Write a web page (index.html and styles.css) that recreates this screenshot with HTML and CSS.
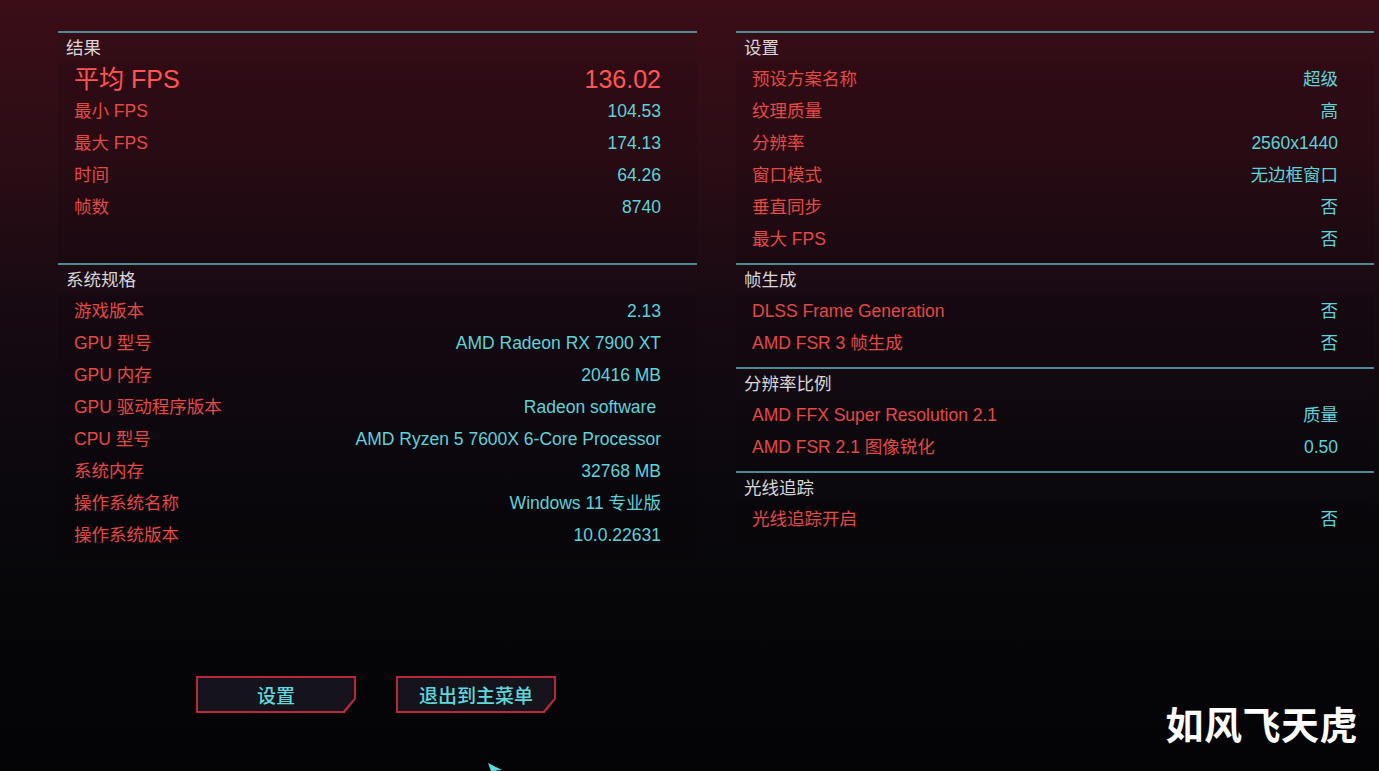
FILE: index.html
```html
<!DOCTYPE html>
<html lang="zh-CN">
<head>
    <meta charset="UTF-8">
    <meta name="viewport" content="width=device-width, initial-scale=1.0">
    <title>基准测试结果</title>
    <link rel="stylesheet" href="styles.css">
</head>
<body>

    <div class="board">
        <!-- left column, top -->
        <div class="section">
            <div class="sec-head">结果</div>
            <div class="row big"><span class="label">平均 FPS</span><span class="value">136.02</span></div>
            <div class="row"><span class="label">最小 FPS</span><span class="value">104.53</span></div>
            <div class="row"><span class="label">最大 FPS</span><span class="value">174.13</span></div>
            <div class="row"><span class="label">时间</span><span class="value">64.26</span></div>
            <div class="row"><span class="label">帧数</span><span class="value">8740</span></div>
        </div>

        <!-- right column, top -->
        <div class="section">
            <div class="sec-head">设置</div>
            <div class="row"><span class="label">预设方案名称</span><span class="value">超级</span></div>
            <div class="row"><span class="label">纹理质量</span><span class="value">高</span></div>
            <div class="row"><span class="label">分辨率</span><span class="value">2560x1440</span></div>
            <div class="row"><span class="label">窗口模式</span><span class="value">无边框窗口</span></div>
            <div class="row"><span class="label">垂直同步</span><span class="value">否</span></div>
            <div class="row"><span class="label">最大 FPS</span><span class="value">否</span></div>
        </div>

        <!-- left column, bottom -->
        <div class="col">
            <div class="section">
                <div class="sec-head">系统规格</div>
                <div class="row"><span class="label">游戏版本</span><span class="value">2.13</span></div>
                <div class="row"><span class="label">GPU 型号</span><span class="value">AMD Radeon RX 7900 XT</span></div>
                <div class="row"><span class="label">GPU 内存</span><span class="value">20416 MB</span></div>
                <div class="row"><span class="label">GPU 驱动程序版本</span><span class="value">Radeon software&nbsp;</span></div>
                <div class="row"><span class="label">CPU 型号</span><span class="value">AMD Ryzen 5 7600X 6-Core Processor</span></div>
                <div class="row"><span class="label">系统内存</span><span class="value">32768 MB</span></div>
                <div class="row"><span class="label">操作系统名称</span><span class="value">Windows 11 专业版</span></div>
                <div class="row"><span class="label">操作系统版本</span><span class="value">10.0.22631</span></div>
            </div>
        </div>

        <!-- right column, bottom -->
        <div class="col">
            <div class="section">
                <div class="sec-head">帧生成</div>
                <div class="row"><span class="label">DLSS Frame Generation</span><span class="value">否</span></div>
                <div class="row"><span class="label">AMD FSR 3 帧生成</span><span class="value">否</span></div>
            </div>
            <div class="section">
                <div class="sec-head">分辨率比例</div>
                <div class="row"><span class="label">AMD FFX Super Resolution 2.1</span><span class="value">质量</span></div>
                <div class="row"><span class="label">AMD FSR 2.1 图像锐化</span><span class="value">0.50</span></div>
            </div>
            <div class="section">
                <div class="sec-head">光线追踪</div>
                <div class="row"><span class="label">光线追踪开启</span><span class="value">否</span></div>
            </div>
        </div>
    </div>

    <div class="actions">
        <button class="cp-btn">设置</button>
        <button class="cp-btn">退出到主菜单</button>
    </div>

    <!-- mouse pointer left on screen -->
    <svg class="cursor" width="20" height="12" viewBox="0 0 20 12">
        <path d="M2 1 L16 8 L10 8.5 L8 12 L6 12 Z" fill="#5fd8dc"/>
    </svg>

    <div class="watermark">如风飞天虎</div>

</body>
</html>
```

FILE: styles.css
```css
* {
  margin: 0;
  padding: 0;
  box-sizing: border-box;
}

body {
  width: 1379px;
  height: 771px;
  overflow: hidden;
  position: relative;
  font-family: "Liberation Sans", "Noto Sans CJK SC", sans-serif;
  font-size: 17.5px;
  background: linear-gradient(180deg, #3b0d17 0%, #2c0d15 20%, #170a12 40%, #0c080e 60%, #060609 78%, #040407 100%);
  padding: 31px 5px 0 58px;
}

.board {
  display: grid;
  grid-template-columns: 639px 638px;
  column-gap: 39px;
  align-items: stretch;
}

.col {
  display: flex;
  flex-direction: column;
}

.section {
  border-top: 2px solid #4f8a92;
  padding-bottom: 8px;
  background: rgba(8, 4, 10, 0.1);
}

.sec-head {
  height: 30px;
  line-height: 30px;
  padding-left: 8px;
  color: #d9d6d8;
  background: rgba(255, 255, 255, 0.012);
}

.row {
  display: flex;
  justify-content: space-between;
  align-items: baseline;
  height: 32px;
  line-height: 32px;
  padding: 0 36px 0 16px;
}

.label {
  color: #e24a45; /* game red */
}

.value {
  color: #5fd2d8; /* game cyan */
}

.row.big .label,
.row.big .value {
  font-size: 25px;
  color: #ff5552;
}

.actions {
  display: flex;
  gap: 40px;
  margin: 117px 0 0 138px;
}

.cp-btn {
  position: relative;
  isolation: isolate;
  width: 160px;
  height: 37px;
  border: none;
  background: #b7293a;
  clip-path: polygon(0 0, 100% 0, 100% 62%, 93% 100%, 0 100%);
  font-family: "Noto Sans CJK SC", sans-serif;
  font-size: 19px;
  font-weight: 500;
  color: #5fd8dc;
  cursor: pointer;
}

.cp-btn::before {
  content: "";
  position: absolute;
  inset: 2px;
  background: #15131c;
  clip-path: polygon(0 0, 100% 0, 100% 61%, 93% 100%, 0 100%);
  z-index: -1;
}

.cursor {
  position: absolute;
  left: 486px;
  top: 762px;
}

.watermark {
  position: absolute;
  right: 21px;
  top: 695px;
  font-family: "Noto Sans CJK SC", sans-serif;
  font-size: 38px;
  font-weight: 700;
  color: #ffffff;
  letter-spacing: 0.5px;
}
```
